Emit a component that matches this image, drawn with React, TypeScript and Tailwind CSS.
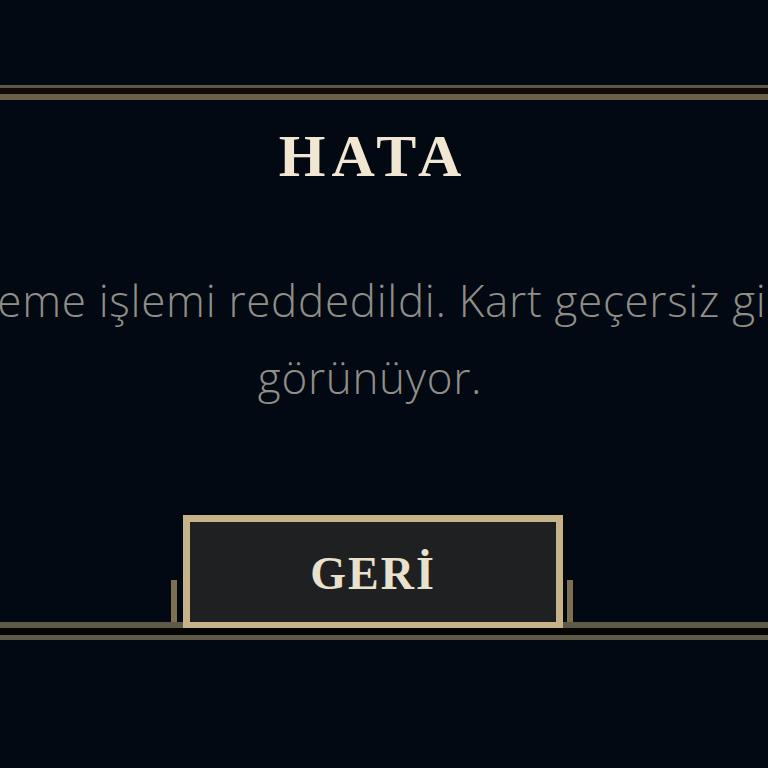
export default function App() {
  return (
    <div className="min-h-screen w-full bg-[#020912] overflow-hidden flex flex-col">
      {/* top frame lines */}
      <div className="pt-[85px]">
        <div className="h-[3px] bg-[#5e5646]" />
        <div className="h-[6px] bg-[#120a06]" />
        <div className="h-[6px] bg-[#6a5f47]" />
      </div>

      <div className="w-[1000px] ml-[-130px] flex flex-col items-center">
        <div
          className="mt-[26px] pl-[6px] text-[60px] leading-[60px] font-bold tracking-[6px] text-[#f0e6d2]"
          style={{ fontFamily: '"Liberation Serif", serif' }}
        >
          HATA
        </div>
        <div
          className="mt-[76px] text-[44px] leading-[77px] font-light tracking-[0.7px] text-center text-[#918e87] whitespace-nowrap"
          style={{ fontFamily: '"Open Sans", sans-serif' }}
        >
          Ödeme işlemi reddedildi. Kart geçersiz gibi
          <br />
          görünüyor.
        </div>
      </div>

      {/* button row */}
      <div className="mt-[99px] flex items-end">
        <div className="w-[183px] flex flex-col">
          <div className="flex justify-end pr-[6px]">
            <div className="w-[6px] h-[42px] bg-[#7d6f52]" />
          </div>
          <div className="h-[6px] bg-[#5f5a48]" />
        </div>
        <button className="w-[380px] h-[113px] border-[7px] border-b-[6px] border-[#c6b38a] bg-[#1f2022] flex items-center justify-center pt-[4px]">
          <span
            className="text-[46px] leading-none font-bold tracking-[2px] text-[#e9e1cc]"
            style={{ fontFamily: '"Liberation Serif", serif' }}
          >
            GERİ
          </span>
        </button>
        <div className="flex-1 flex flex-col">
          <div className="flex pl-[4px]">
            <div className="w-[6px] h-[42px] bg-[#7d6f52]" />
          </div>
          <div className="h-[6px] bg-[#5f5a48]" />
        </div>
      </div>
      <div className="h-[7px] bg-[#050505]" />
      <div className="h-[5px] bg-[#5f5a48]" />
    </div>
  );
}
